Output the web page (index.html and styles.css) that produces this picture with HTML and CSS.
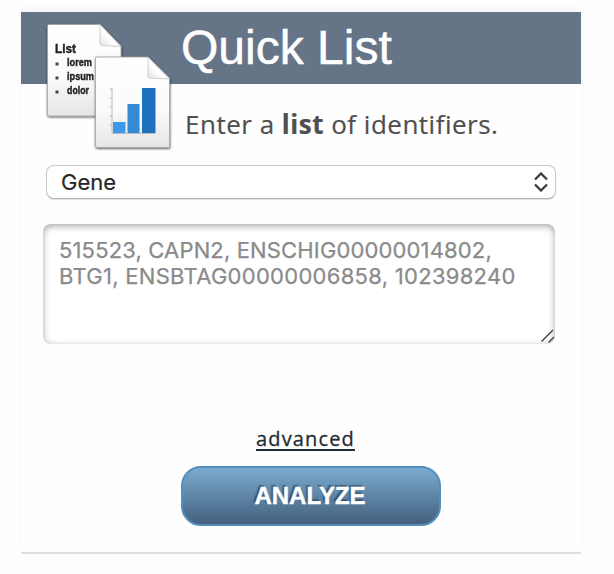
FILE: index.html
```html
<!DOCTYPE html>
<html lang="en">
<head>
<meta charset="utf-8">
<title>Quick List</title>
<link rel="stylesheet" href="styles.css">
</head>
<body>
<main class="card">
  <svg class="docs" width="132" height="134" viewBox="0 0 132 134" aria-hidden="true">
    <defs>
      <linearGradient id="paper" x1="0" y1="0" x2="0" y2="1"><stop offset="0" stop-color="#fff"/><stop offset=".6" stop-color="#fafafa"/><stop offset="1" stop-color="#e5e5e5"/></linearGradient>
      <linearGradient id="fold" x1="0" y1="1" x2="1" y2="0"><stop offset="0" stop-color="#e2e2e2"/><stop offset=".4" stop-color="#fff"/><stop offset="1" stop-color="#e6e6e6"/></linearGradient>
      <filter id="shade" x="-10%" y="-10%" width="120%" height="120%"><feDropShadow dx="0.3" dy="1" stdDeviation="1" flood-color="#000" flood-opacity=".65"/></filter>
    </defs>
    <g filter="url(#shade)">
      <path d="M6 4.500H57L78 26V96H6Q4.500 96 4.500 94.500V6Q4.500 4.500 6 4.500Z" fill="url(#paper)" stroke="#a0a0a0" stroke-width=".8"/>
      <path d="M57 4.500V23Q57 25.500 59 25.500L78 26.500Z" fill="url(#fold)" stroke="#bbb" stroke-width=".7"/>
    </g>
    <g class="docs-text">
      <text x="12" y="32.500" class="docs-title" textLength="21" lengthAdjust="spacingAndGlyphs">List</text>
      <text x="24" y="46" textLength="25" lengthAdjust="spacingAndGlyphs">lorem</text>
      <text x="24" y="60" textLength="27" lengthAdjust="spacingAndGlyphs">ipsum</text>
      <text x="24" y="74" textLength="22" lengthAdjust="spacingAndGlyphs">dolor</text>
      <path d="M12.500 42.500h3v3h-3zM12.500 56.500h3v3h-3zM12.500 70.500h3v3h-3z" fill="#444" stroke="none"/>
    </g>
    <g filter="url(#shade)">
      <path d="M54 37H105L126.500 58V127.500H54Q52.500 127.500 52.500 126V38.500Q52.500 37 54 37Z" fill="url(#paper)" stroke="#a0a0a0" stroke-width=".8"/>
      <path d="M105 37V56Q105 58 107 58L126.500 59Z" fill="url(#fold)" stroke="#bbb" stroke-width=".7"/>
    </g>
    <path d="M69 68V113.500H112M66.500 69H69M66.500 78H69M66.500 87H69M66.500 96H69M66.500 105H69" fill="none" stroke="#bbb"/>
    <path d="M70 102H82.500V113H70Z" fill="#3d9aea"/>
    <path d="M84.500 84H96.500V113H84.500Z" fill="#338bd6"/>
    <path d="M99 68H112.500V113H99Z" fill="#1c72bf"/>
  </svg>
  <h1 class="title">Quick List</h1>
  <p class="intro">Enter a <b>list</b> of identifiers.</p>
  <div class="select"><span>Gene</span>
    <svg width="14" height="20" viewBox="0 0 14 20" aria-hidden="true"><path d="M1 7.500L7 1.500L13 7.500M1 12.500L7 18.500L13 12.500" fill="none" stroke="#3b3b3b" stroke-width="2.300"/></svg>
  </div>
  <div class="area"><span class="line first">515523, CAPN2, ENSCHIG00000014802,</span><span class="line second">BTG1, ENSBTAG00000006858, 102398240</span>
    <svg class="grip" width="15" height="15" viewBox="0 0 15 15" aria-hidden="true"><path d="M1.500 12.500L13 1M8.500 13.500L14 8" fill="none" stroke="#4a4a4a" stroke-width="1.500"/></svg>
  </div>
  <a class="advanced">advanced</a>
  <button class="analyze" type="button"><span>ANALYZE</span></button>
</main>
</body>
</html>
```
FILE: styles.css
```css
* { box-sizing: border-box; }
body {
  margin: 0;
  padding: 12px 33px 0 21px;
  height: 574px;
  overflow: hidden;
  background: #fefefe;
}
.card {
  position: relative;
  display: flex;
  flex-direction: column;
  width: 560px;
  height: 542px;
  background: #fefefe;
  border-bottom: 2px solid #dedede;
  box-shadow: 0 -4px 10px -2px rgba(0, 0, 0, .06);
}
.docs { position: absolute; left: 22px; top: 8px; }
.docs-text { font: bold 10.5px "Liberation Sans", sans-serif; fill: #222; stroke: #222; stroke-width: .4px; filter: blur(.35px); }
.docs-title { font-size: 12.5px; }
.title {
  margin: 0;
  height: 72px;
  padding: 0 0 0 160px;
  background: #667488;
  color: #fff;
  font: 400 48px/71px "Liberation Sans", Arial, sans-serif;
  -webkit-text-stroke: .5px #fff;
}
.intro {
  margin: 22px 0 0 164px;
  height: 36px;
  color: #4f4f4f;
  font: 26px/36px "Open Sans", sans-serif;
  letter-spacing: .5px;
  white-space: nowrap;
  -webkit-text-stroke: .2px #4f4f4f;
}
.select {
  display: flex;
  align-items: center;
  justify-content: space-between;
  width: 510px;
  height: 34px;
  margin: 23px 0 0 25px;
  padding: 0 7px 0 14px;
  border: 1px solid #c9c9c9;
  border-bottom-color: #b4b4b4;
  border-radius: 8px;
  background: #fff;
  box-shadow: 0 1px 1px rgba(0, 0, 0, .12);
  color: #262626;
  font: 22px/32px Inter, sans-serif;
  -webkit-text-stroke: .2px #262626;
}
.area {
  position: relative;
  width: 512px;
  height: 120px;
  margin: 25px 0 0 22px;
  padding: 13px 16px;
  border-radius: 8px;
  background: #fff;
  box-shadow: inset 0 2px 7px rgba(0, 0, 0, .36);
  color: #8a8a8a;
  font: 22px/26px Inter, sans-serif;
  -webkit-text-stroke: .25px #8a8a8a;
}
.line { display: block; width: max-content; white-space: nowrap; }
.first { letter-spacing: .15px; }
.second { letter-spacing: .29px; }
.grip { position: absolute; right: 0; bottom: 0; }
.advanced {
  align-self: flex-start;
  margin: 80px 0 0 235px;
  height: 30px;
  color: #1f2d36;
  font: 20px/30px "Open Sans", sans-serif;
  letter-spacing: 1.15px;
  text-decoration: underline;
  text-decoration-thickness: 1.5px;
  text-underline-offset: 3px;
  -webkit-text-stroke: .3px #1f2d36;
}
.analyze {
  width: 260px;
  height: 60px;
  margin: 12px 0 0 160px;
  padding: 0 2px 0 0;
  border: 2px solid #5590bd;
  border-radius: 20px;
  background: linear-gradient(#7aabd0, #44607d);
  color: #fff;
  font: bold 24px/56px "Liberation Sans", Arial, sans-serif;
  -webkit-text-stroke: .4px #fff;
  text-shadow: -2px -2px 1px rgba(25, 45, 70, .5);
}
```
